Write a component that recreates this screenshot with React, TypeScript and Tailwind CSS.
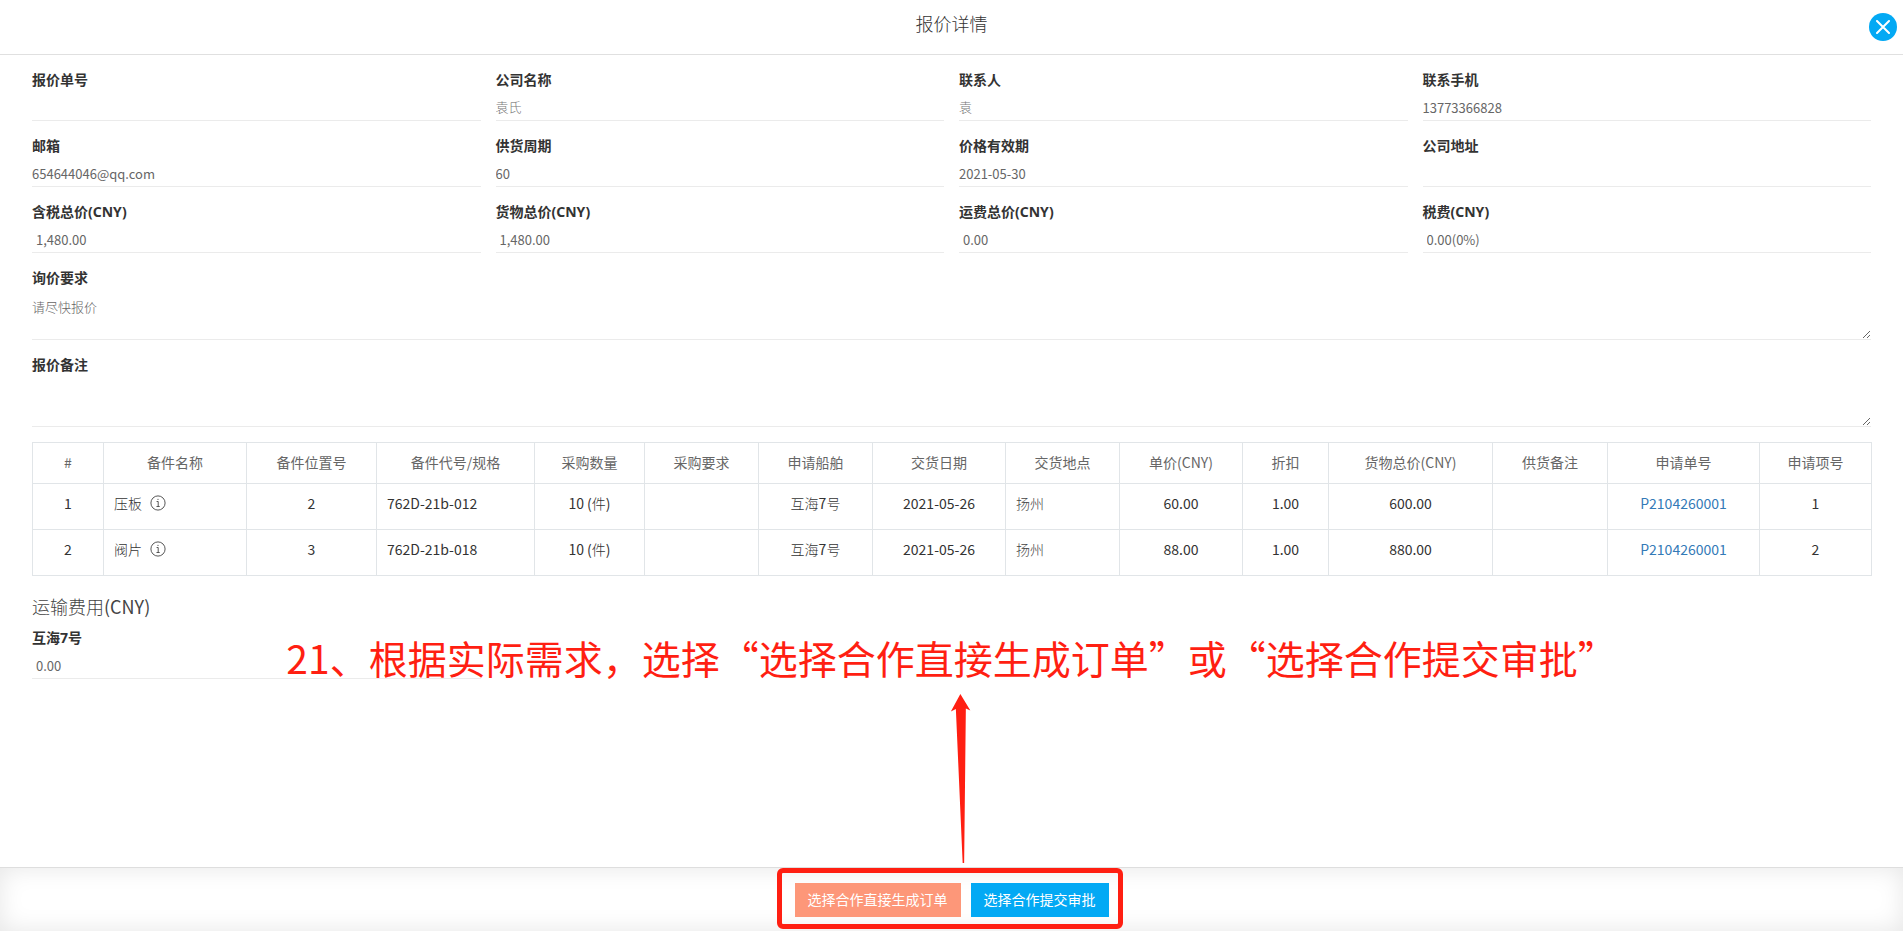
import React from "react";

type FieldProps = {
  id: string;
  label: string;
  value?: string;
  amount?: boolean;
  light?: boolean;
};

const labelClass =
  "block font-['Noto_Sans','Noto_Sans_CJK_SC',sans-serif] text-sm leading-5 font-bold text-[#333]";

function Field({ id, label, value = "", amount = false, light = false }: FieldProps) {
  return (
    <div>
      <label htmlFor={id} className={labelClass}>
        {label}
      </label>
      <input
        id={id}
        type="text"
        readOnly
        defaultValue={value}
        className={
          "block h-[31px] w-full border-b border-[#ebebeb] bg-transparent text-[13px] outline-none " +
          (amount ? "pl-1 " : "") +
          (light ? "pt-[3px] font-light text-[#777]" : "pt-1 text-[#666]")
        }
      />
    </div>
  );
}

function TextareaField({ id, label, value = "" }: FieldProps) {
  return (
    <div>
      <label htmlFor={id} className={labelClass}>
        {label}
      </label>
      <textarea
        id={id}
        readOnly
        defaultValue={value}
        className="block h-[52px] w-full resize-y border-b border-[#ebebeb] bg-transparent pt-[9px] text-[13px] leading-5 font-light text-[#666] outline-none"
      />
    </div>
  );
}

function InfoIcon() {
  return (
    <svg viewBox="0 0 16 16" className="size-4" fill="none" stroke="#444" strokeWidth="0.9" aria-hidden="true">
      <circle cx="8" cy="8" r="7.1" />
      <path d="M6.6 6.5H8.2V11.4M6.5 11.5H9.7" />
      <circle cx="8" cy="4.3" r="0.6" fill="#444" stroke="none" />
    </svg>
  );
}

const fields: FieldProps[] = [
  { id: "quoteNo", label: "报价单号" },
  { id: "company", label: "公司名称", value: "袁氏", light: true },
  { id: "contact", label: "联系人", value: "袁", light: true },
  { id: "phone", label: "联系手机", value: "13773366828" },
  { id: "email", label: "邮箱", value: "654644046@qq.com" },
  { id: "period", label: "供货周期", value: "60" },
  { id: "validity", label: "价格有效期", value: "2021-05-30" },
  { id: "address", label: "公司地址" },
  { id: "total", label: "含税总价(CNY)", value: "1,480.00", amount: true },
  { id: "goods", label: "货物总价(CNY)", value: "1,480.00", amount: true },
  { id: "freight", label: "运费总价(CNY)", value: "0.00", amount: true },
  { id: "tax", label: "税费(CNY)", value: "0.00(0%)", amount: true },
];

const columns = [
  { title: "#", width: "w-[71px]" },
  { title: "备件名称", width: "w-[143px]" },
  { title: "备件位置号", width: "w-[130px]" },
  { title: "备件代号/规格", width: "w-[158px]" },
  { title: "采购数量", width: "w-[110px]" },
  { title: "采购要求", width: "w-[114px]" },
  { title: "申请船舶", width: "w-[114px]" },
  { title: "交货日期", width: "w-[133px]" },
  { title: "交货地点", width: "w-[114px]" },
  { title: "单价(CNY)", width: "w-[123px]" },
  { title: "折扣", width: "w-[86px]" },
  { title: "货物总价(CNY)", width: "w-[164px]" },
  { title: "供货备注", width: "w-[115px]" },
  { title: "申请单号", width: "w-[152px]" },
  { title: "申请项号", width: "w-[112px]" },
];

const rows = [
  { no: "1", name: "压板", pos: "2", code: "762D-21b-012", price: "60.00", total: "600.00" },
  { no: "2", name: "阀片", pos: "3", code: "762D-21b-018", price: "88.00", total: "880.00" },
];

function Cell({ children, left = false }: { children?: React.ReactNode; left?: boolean }) {
  return (
    <td
      className={
        "h-[46px] border border-[#e1e5e8] px-[10px] pt-[9px] align-top leading-5 " +
        (left ? "text-left" : "text-center")
      }
    >
      {children}
    </td>
  );
}

export default function App() {
  return (
    <div className="flex min-h-screen flex-col overflow-x-hidden bg-white font-['Noto_Sans_CJK_SC',sans-serif] text-sm text-[#333]">
      <header className="relative flex h-[55px] items-center justify-center border-b border-[#e0e0e0] pb-2">
        <h1 className="text-lg leading-6 font-light text-[#333]">报价详情</h1>
        <button
          type="button"
          aria-label="关闭"
          className="absolute top-[13px] right-[6px] flex size-7 items-center justify-center rounded-full bg-[#03a9f4]"
        >
          <svg viewBox="0 0 14 14" className="size-[14px]" stroke="#fff" strokeWidth="2" strokeLinecap="round" aria-hidden="true">
            <path d="M1 1L13 13M13 1L1 13" />
          </svg>
        </button>
      </header>

      <main className="flex flex-1 flex-col px-8 pt-[15px]">
        <div className="grid grid-cols-4 gap-[15px]">
          {fields.map((f) => (
            <Field key={f.id} {...f} />
          ))}
        </div>
        <div className="mt-[15px] flex flex-col gap-[15px]">
          <TextareaField id="require" label="询价要求" value="请尽快报价" />
          <TextareaField id="remark" label="报价备注" />
        </div>

        <table className="mt-[15px] w-full table-fixed border-collapse">
          <thead>
            <tr>
              {columns.map((c) => (
                <th key={c.title} className={"h-[41px] border border-[#e1e5e8] p-0 pb-[2px] font-normal text-[#666] " + c.width}>
                  {c.title}
                </th>
              ))}
            </tr>
          </thead>
          <tbody>
            {rows.map((r) => (
              <tr key={r.no}>
                <Cell>{r.no}</Cell>
                <Cell left>
                  <span className="flex items-center gap-2 font-light">
                    {r.name}
                    <InfoIcon />
                  </span>
                </Cell>
                <Cell>{r.pos}</Cell>
                <Cell left>{r.code}</Cell>
                <Cell>
                  10 (<span className="font-light">件</span>)
                </Cell>
                <Cell />
                <Cell>
                  <span className="font-light">互海</span>7<span className="font-light">号</span>
                </Cell>
                <Cell>2021-05-26</Cell>
                <Cell left>
                  <span className="font-light text-[#444]">扬州</span>
                </Cell>
                <Cell>{r.price}</Cell>
                <Cell>1.00</Cell>
                <Cell>{r.total}</Cell>
                <Cell />
                <Cell>
                  <a href="#" className="text-[#337ab7]">
                    P2104260001
                  </a>
                </Cell>
                <Cell>{r.no}</Cell>
              </tr>
            ))}
          </tbody>
        </table>

        <h2 className="mt-[18px] mb-[10px] text-lg leading-6 text-[#444]">
          <span className="font-light">运输费用</span>(CNY)
        </h2>
        <div className="grid grid-cols-4 gap-[15px]">
          <Field id="shipFreight" label="互海7号" value="0.00" amount />
        </div>
      </main>

      <footer className="flex h-16 items-center justify-center border-t border-[#dedede] shadow-[inset_0_0_24px_rgba(0,0,0,0.1)]">
        <div className="relative flex gap-[10px]">
          <button type="button" className="h-[34px] bg-[#fd9779] px-[13px] pb-[2px] text-sm text-white">
            选择合作直接生成订单
          </button>
          <button type="button" className="h-[34px] bg-[#03a9f4] px-[13px] pb-[2px] text-sm text-white">
            选择合作提交审批
          </button>
          <div className="pointer-events-none absolute -top-[15px] -right-[14px] -bottom-3 -left-[18px] rounded-md border-[5px] border-[#ff1f12]" />
          <div className="pointer-events-none absolute bottom-full left-1/2 mb-5 flex -translate-x-1/2 flex-col items-center gap-[10px]">
            <p className="text-[39px] leading-[54px] whitespace-nowrap text-[#ff1f12]">
              21、根据实际需求，选择“选择合作直接生成订单”或“选择合作提交审批”
            </p>
            <svg viewBox="0 0 20 169" className="ml-[18px] h-[169px] w-5" fill="#ff1f12" aria-hidden="true">
              <path d="M9.5 0L19.5 16.6L15 14.4L13.3 169H11.8L5 15L0 17.6Z" />
            </svg>
          </div>
        </div>
      </footer>
    </div>
  );
}
